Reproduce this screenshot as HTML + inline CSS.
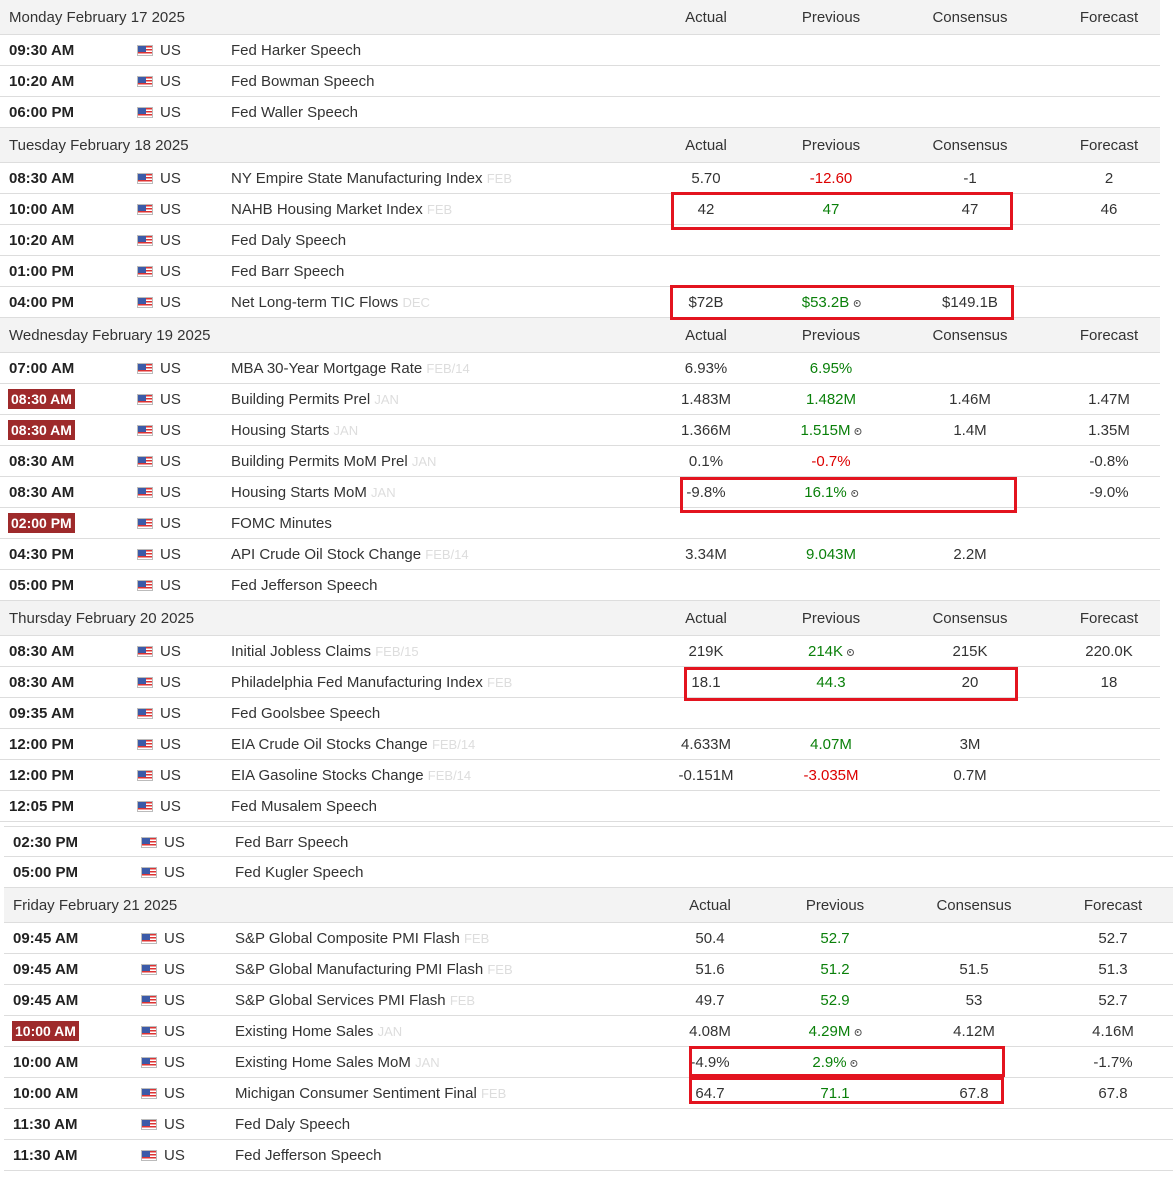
<!DOCTYPE html>
<html><head><meta charset="utf-8"><style>
*{margin:0;padding:0;box-sizing:border-box}
body{width:1173px;height:1180px;background:#fff;font-family:"Liberation Sans",Arial,sans-serif;font-size:15px;color:#333;position:relative;overflow:hidden}
.sec{position:absolute}
.h,.r{position:absolute;left:0;right:0;border-bottom:1px solid #ddd;white-space:nowrap}
.h{height:35px;background:#f3f3f3;line-height:35px}
.r{height:31px;line-height:31px}
.h .d{position:absolute;left:9px}
.t{position:absolute;left:9px;font-weight:bold;color:#222}
.t.x{background:#9e2a2b;color:#fff;left:8px;top:5px;line-height:20px;height:20px;padding:0 3px;font-size:14px}
.f{position:absolute;left:137px;top:10px;width:16px;height:11px;background:repeating-linear-gradient(#d33 0 1.5px,#fff 1.5px 3px);border:1px solid #bbb}
.f:after{content:"";position:absolute;left:0;top:0;width:8px;height:6px;background:#3b5aa8}
.c{position:absolute;left:160px}
.e{position:absolute;left:231px}
.e small{color:#ddd;font-size:13px}
.a,.p,.n,.o{position:absolute;transform:translateX(-50%)}
.a{left:706px}.p{left:831px}.n{left:970px}.o{left:1109px}
.g{color:#0a800a}.rd{color:#d00}
.i{display:inline-block;width:7px;height:7px;border:1.5px solid #555;border-radius:50%;margin-left:4px;vertical-align:0;position:relative}
.i:after{content:"";position:absolute;left:1px;top:1px;width:2px;height:2px;background:#555;border-radius:50%}
.box{position:absolute;border:3px solid #e3141f}
</style></head><body>

<div class="sec" style="left:0;top:0;width:1160px;height:826px">
<div class="h" style="top:0"><span class="d">Monday February 17 2025</span><span class="a">Actual</span><span class="p">Previous</span><span class="n">Consensus</span><span class="o">Forecast</span></div>
<div class="r" style="top:35px"><b class="t">09:30 AM</b><i class="f"></i><span class="c">US</span><span class="e">Fed Harker Speech</span></div>
<div class="r" style="top:66px"><b class="t">10:20 AM</b><i class="f"></i><span class="c">US</span><span class="e">Fed Bowman Speech</span></div>
<div class="r" style="top:97px"><b class="t">06:00 PM</b><i class="f"></i><span class="c">US</span><span class="e">Fed Waller Speech</span></div>

<div class="h" style="top:128px"><span class="d">Tuesday February 18 2025</span><span class="a">Actual</span><span class="p">Previous</span><span class="n">Consensus</span><span class="o">Forecast</span></div>
<div class="r" style="top:163px"><b class="t">08:30 AM</b><i class="f"></i><span class="c">US</span><span class="e">NY Empire State Manufacturing Index <small>FEB</small></span><span class="a">5.70</span><span class="p rd">-12.60</span><span class="n">-1</span><span class="o">2</span></div>
<div class="r" style="top:194px"><b class="t">10:00 AM</b><i class="f"></i><span class="c">US</span><span class="e">NAHB Housing Market Index <small>FEB</small></span><span class="a">42</span><span class="p g">47</span><span class="n">47</span><span class="o">46</span></div>
<div class="r" style="top:225px"><b class="t">10:20 AM</b><i class="f"></i><span class="c">US</span><span class="e">Fed Daly Speech</span></div>
<div class="r" style="top:256px"><b class="t">01:00 PM</b><i class="f"></i><span class="c">US</span><span class="e">Fed Barr Speech</span></div>
<div class="r" style="top:287px"><b class="t">04:00 PM</b><i class="f"></i><span class="c">US</span><span class="e">Net Long-term TIC Flows <small>DEC</small></span><span class="a">$72B</span><span class="p g">$53.2B<i class="i"></i></span><span class="n">$149.1B</span></div>

<div class="h" style="top:318px"><span class="d">Wednesday February 19 2025</span><span class="a">Actual</span><span class="p">Previous</span><span class="n">Consensus</span><span class="o">Forecast</span></div>
<div class="r" style="top:353px"><b class="t">07:00 AM</b><i class="f"></i><span class="c">US</span><span class="e">MBA 30-Year Mortgage Rate <small>FEB/14</small></span><span class="a">6.93%</span><span class="p g">6.95%</span></div>
<div class="r" style="top:384px"><b class="t x">08:30 AM</b><i class="f"></i><span class="c">US</span><span class="e">Building Permits Prel <small>JAN</small></span><span class="a">1.483M</span><span class="p g">1.482M</span><span class="n">1.46M</span><span class="o">1.47M</span></div>
<div class="r" style="top:415px"><b class="t x">08:30 AM</b><i class="f"></i><span class="c">US</span><span class="e">Housing Starts <small>JAN</small></span><span class="a">1.366M</span><span class="p g">1.515M<i class="i"></i></span><span class="n">1.4M</span><span class="o">1.35M</span></div>
<div class="r" style="top:446px"><b class="t">08:30 AM</b><i class="f"></i><span class="c">US</span><span class="e">Building Permits MoM Prel <small>JAN</small></span><span class="a">0.1%</span><span class="p rd">-0.7%</span><span class="o">-0.8%</span></div>
<div class="r" style="top:477px"><b class="t">08:30 AM</b><i class="f"></i><span class="c">US</span><span class="e">Housing Starts MoM <small>JAN</small></span><span class="a">-9.8%</span><span class="p g">16.1%<i class="i"></i></span><span class="o">-9.0%</span></div>
<div class="r" style="top:508px"><b class="t x">02:00 PM</b><i class="f"></i><span class="c">US</span><span class="e">FOMC Minutes</span></div>
<div class="r" style="top:539px"><b class="t">04:30 PM</b><i class="f"></i><span class="c">US</span><span class="e">API Crude Oil Stock Change <small>FEB/14</small></span><span class="a">3.34M</span><span class="p g">9.043M</span><span class="n">2.2M</span></div>
<div class="r" style="top:570px"><b class="t">05:00 PM</b><i class="f"></i><span class="c">US</span><span class="e">Fed Jefferson Speech</span></div>

<div class="h" style="top:601px"><span class="d">Thursday February 20 2025</span><span class="a">Actual</span><span class="p">Previous</span><span class="n">Consensus</span><span class="o">Forecast</span></div>
<div class="r" style="top:636px"><b class="t">08:30 AM</b><i class="f"></i><span class="c">US</span><span class="e">Initial Jobless Claims <small>FEB/15</small></span><span class="a">219K</span><span class="p g">214K<i class="i"></i></span><span class="n">215K</span><span class="o">220.0K</span></div>
<div class="r" style="top:667px"><b class="t">08:30 AM</b><i class="f"></i><span class="c">US</span><span class="e">Philadelphia Fed Manufacturing Index <small>FEB</small></span><span class="a">18.1</span><span class="p g">44.3</span><span class="n">20</span><span class="o">18</span></div>
<div class="r" style="top:698px"><b class="t">09:35 AM</b><i class="f"></i><span class="c">US</span><span class="e">Fed Goolsbee Speech</span></div>
<div class="r" style="top:729px"><b class="t">12:00 PM</b><i class="f"></i><span class="c">US</span><span class="e">EIA Crude Oil Stocks Change <small>FEB/14</small></span><span class="a">4.633M</span><span class="p g">4.07M</span><span class="n">3M</span></div>
<div class="r" style="top:760px"><b class="t">12:00 PM</b><i class="f"></i><span class="c">US</span><span class="e">EIA Gasoline Stocks Change <small>FEB/14</small></span><span class="a">-0.151M</span><span class="p rd">-3.035M</span><span class="n">0.7M</span></div>
<div class="r" style="top:791px"><b class="t">12:05 PM</b><i class="f"></i><span class="c">US</span><span class="e">Fed Musalem Speech</span></div>
</div>

<div class="sec" style="left:4px;top:826px;width:1169px;height:354px">
<div class="r" style="top:0;border-top:1px solid #ddd"><b class="t">02:30 PM</b><i class="f"></i><span class="c">US</span><span class="e">Fed Barr Speech</span></div>
<div class="r" style="top:31px"><b class="t">05:00 PM</b><i class="f"></i><span class="c">US</span><span class="e">Fed Kugler Speech</span></div>
<div class="h" style="top:62px"><span class="d">Friday February 21 2025</span><span class="a">Actual</span><span class="p">Previous</span><span class="n">Consensus</span><span class="o">Forecast</span></div>
<div class="r" style="top:97px"><b class="t">09:45 AM</b><i class="f"></i><span class="c">US</span><span class="e">S&amp;P Global Composite PMI Flash <small>FEB</small></span><span class="a">50.4</span><span class="p g">52.7</span><span class="o">52.7</span></div>
<div class="r" style="top:128px"><b class="t">09:45 AM</b><i class="f"></i><span class="c">US</span><span class="e">S&amp;P Global Manufacturing PMI Flash <small>FEB</small></span><span class="a">51.6</span><span class="p g">51.2</span><span class="n">51.5</span><span class="o">51.3</span></div>
<div class="r" style="top:159px"><b class="t">09:45 AM</b><i class="f"></i><span class="c">US</span><span class="e">S&amp;P Global Services PMI Flash <small>FEB</small></span><span class="a">49.7</span><span class="p g">52.9</span><span class="n">53</span><span class="o">52.7</span></div>
<div class="r" style="top:190px"><b class="t x">10:00 AM</b><i class="f"></i><span class="c">US</span><span class="e">Existing Home Sales <small>JAN</small></span><span class="a">4.08M</span><span class="p g">4.29M<i class="i"></i></span><span class="n">4.12M</span><span class="o">4.16M</span></div>
<div class="r" style="top:221px"><b class="t">10:00 AM</b><i class="f"></i><span class="c">US</span><span class="e">Existing Home Sales MoM <small>JAN</small></span><span class="a">-4.9%</span><span class="p g">2.9%<i class="i"></i></span><span class="o">-1.7%</span></div>
<div class="r" style="top:252px"><b class="t">10:00 AM</b><i class="f"></i><span class="c">US</span><span class="e">Michigan Consumer Sentiment Final <small>FEB</small></span><span class="a">64.7</span><span class="p g">71.1</span><span class="n">67.8</span><span class="o">67.8</span></div>
<div class="r" style="top:283px"><b class="t">11:30 AM</b><i class="f"></i><span class="c">US</span><span class="e">Fed Daly Speech</span></div>
<div class="r" style="top:314px"><b class="t">11:30 AM</b><i class="f"></i><span class="c">US</span><span class="e">Fed Jefferson Speech</span></div>
</div>

<div class="box" style="left:671px;top:192px;width:342px;height:38px"></div>
<div class="box" style="left:670px;top:285px;width:344px;height:35px"></div>
<div class="box" style="left:680px;top:477px;width:337px;height:36px"></div>
<div class="box" style="left:684px;top:667px;width:334px;height:34px"></div>
<div class="box" style="left:689px;top:1046px;width:316px;height:31px"></div>
<div class="box" style="left:689px;top:1077px;width:315px;height:27px"></div>
</body></html>
